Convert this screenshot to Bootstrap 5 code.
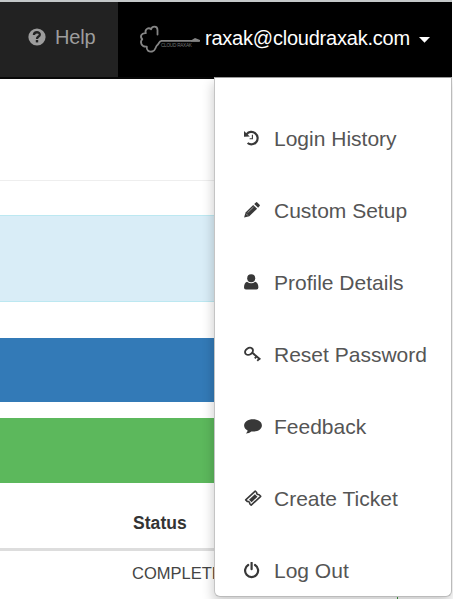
<!DOCTYPE html>
<html lang="en">
<head>
<meta charset="utf-8">
<meta name="viewport" content="width=device-width, initial-scale=1">
<title>Cloud Raxak</title>
<link rel="stylesheet" href="https://cdn.jsdelivr.net/npm/bootstrap@5.3.0/dist/css/bootstrap.min.css">
<style>
body{font-family:"Liberation Sans",Arial,sans-serif;background:#fff;width:453px;height:599px}
.topbar{height:79px;width:452px;background:#222;border-top:2px solid #c4c8c9;border-bottom:2px solid #080808}
.help-link{width:118px;padding-left:28px;color:#9d9d9d;font-size:20px;gap:9px;height:70px}
.help-link span{letter-spacing:-.2px}
.account{background:#000;color:#fff;padding-left:21px;font-size:20px;height:75px;padding-bottom:4px}
.account .mail{letter-spacing:-.22px;margin-left:4px}
.brand-key{margin-top:5px}
.caret{margin-left:9px;margin-top:4px}
main{width:440px}
.heading-space{height:102px;border-bottom:1px solid #eee}
.info-box{height:87px;margin-top:34px;background:#d9edf7;border:solid #bce8f1;border-width:1px 0}
.bar-blue{height:64px;margin-top:36px;background:#337ab7}
.bar-green{height:65px;margin-top:16px;background:#5cb85c}
.status-head{height:68px;border-bottom:3px solid #ddd;padding:28px 0 0 133px;font-weight:700;font-size:17.5px;line-height:24px;color:#333;letter-spacing:.05px}
.status-row{height:48px;padding:10px 0 0 132px;font-size:16.5px;line-height:24px;color:#444}
.row-tick{width:1px;height:2px;margin-left:auto;margin-right:42px;background:#3c963c}
.user-menu{left:213.5px;top:77px;width:238.5px;height:520px;border:1px solid #bbb;border-top-color:#999;border-left-color:#c4c4c4;border-radius:0 0 6px 6px;box-shadow:-1px 6px 12px rgba(0,0,0,.2);padding:24px 0 0;margin:0;background:#fff}
.user-menu a{height:72px;padding:2px 0 0 29.5px;font-size:21px;color:#555;display:flex;align-items:center}
.user-menu svg{width:18px;height:18px;margin-right:12px;color:#383838;flex:none}
</style>
<script src="https://cdn.jsdelivr.net/npm/bootstrap@5.3.0/dist/js/bootstrap.bundle.min.js"></script>
</head>
<body class="position-relative overflow-hidden">
<nav class="topbar d-flex">
  <a href="#" class="help-link d-flex align-items-center text-decoration-none">
    <svg width="18" height="18" viewBox="0 0 18 18"><circle cx="9" cy="9" r="8.6" fill="#9d9d9d"/><path d="M5.9 7C6 3.3 12 3.5 11.8 6.7C11.7 8.7 9 8.4 9 10.9" fill="none" stroke="#222" stroke-width="2.3"/><rect x="7.8" y="12" width="2.4" height="2.4" fill="#222"/></svg>
    <span>Help</span>
  </a>
  <a href="#" class="account d-flex align-items-center flex-grow-1 text-decoration-none">
    <svg class="brand-key" width="62" height="30" viewBox="0 0 62 30"><g fill="none" stroke="#858585" stroke-width="1.8" stroke-linecap="round" stroke-linejoin="round"><path d="M18.5 9.5V5C18.5 2.6 17.5 1.6 15.5 1.6C13 1.6 12.3 3 12.2 4.3C9.5 1.7 5.4 4.5 6.8 8.2C2 7.8.8 12 3.3 14.2C.8 16.7 2 22.2 7.8 21.6C7.2 25.5 10 27.2 13.1 26.5C17 25.6 16 22.3 18 20.4C20 18.8 20 16.2 22.5 15.8H60"/></g><path d="M52 15.5L56 13L61 15V16.5H52Z" fill="#858585"/><text x="22" y="22" font-size="4.7" textLength="31" fill="#727272" font-family="Liberation Sans, sans-serif">CLOUD RAXAK</text></svg>
    <span class="mail">raxak@cloudraxak.com</span>
    <svg class="caret" width="11" height="6" viewBox="0 0 11 6"><path d="M0 0H11L5.5 5.7Z" fill="#fff"/></svg>
  </a>
</nav>
<main>
  <div class="heading-space"></div>
  <div class="info-box"></div>
  <div class="bar-blue"></div>
  <div class="bar-green"></div>
  <div class="status-head">Status</div>
  <div class="status-row d-flex align-items-end"><span class="align-self-start">COMPLETED</span><i class="row-tick"></i></div>
</main>
<ul class="user-menu position-absolute list-unstyled">
  <li><a href="#" class="text-decoration-none"><svg viewBox="0 0 18 18"><path d="M2.6 4.2A6.2 6.2 0 1 1 3.6 13" fill="none" stroke="currentColor" stroke-width="2.2"/><path d="M0 1L5.8 6.4L0 6.7Z" fill="currentColor"/><path d="M8.4 4.8V8.8H5.6" fill="none" stroke="currentColor" stroke-width="1.1"/></svg>Login History</a></li>
  <li><a href="#" class="text-decoration-none"><svg viewBox="0 0 18 18"><g transform="translate(-.7 -1)"><path fill="currentColor" d="M.8 16.5L2.2 11.4L9.9 4L13.8 7.8L6 15.3ZM10.9 3L12.6 1.4Q13.3.8 14 1.4L16.3 3.7Q16.9 4.4 16.3 5.1L14.8 6.8Z"/><path d="M4.2 11.7L10.2 6M2.6 12.5L4.6 14.5" stroke="#fff" stroke-width=".5"/></g></svg>Custom Setup</a></li>
  <li><a href="#" class="text-decoration-none"><svg viewBox="0 0 18 18"><circle cx="7.2" cy="4.3" r="4" fill="currentColor"/><path d="M3 7.7Q7.2 11 11.2 7.7Q14.4 8.8 14.4 13.5Q14.4 15.5 12.5 15.5H1.9Q0 15.5 0 13.5Q0 8.8 3 7.7Z" fill="currentColor"/></svg>Profile Details</a></li>
  <li><a href="#" class="text-decoration-none"><svg viewBox="0 0 18 18"><g fill="none" stroke="currentColor" transform="translate(-.2 -1)"><ellipse cx="5.2" cy="6.3" rx="4.2" ry="3.2" transform="rotate(-35 5.2 6.3)" stroke-width="1.9"/><path d="M8.2 7.6L16.5 14.5" stroke-width="2"/><path d="M13 11.2L11 13.4M15.6 13.5L13.5 15.8" stroke-width="1.8"/></g></svg>Reset Password</a></li>
  <li><a href="#" class="text-decoration-none"><svg viewBox="0 0 18 18"><path fill="currentColor" d="M9 1.2C4 1.2.1 3.9.1 7.4C.1 9.5 1.5 11.3 3.6 12.4C3.4 13.8 2.6 14.8 1.7 15.6C4.3 15.4 6 14.6 7.3 13.5C13 14 17.9 11.4 17.9 7.4C17.9 3.9 14 1.2 9 1.2Z"/></svg>Feedback</a></li>
  <li><a href="#" class="text-decoration-none"><svg viewBox="0 0 18 18"><g transform="translate(.2 -.8)"><path fill="none" stroke="currentColor" stroke-width="1.6" stroke-linejoin="round" d="M1.5 10.7L11 1.9L12.5 3.3Q12.2 5.5 15 5.5L16.5 7.1L7 16L5.5 14.5Q5.8 12.3 3 12.2Z"/><path d="M4.8 10.6L10.7 5L13.3 7.5L7.4 13.1Z" fill="currentColor"/></g></svg>Create Ticket</a></li>
  <li><a href="#" class="text-decoration-none"><svg viewBox="0 0 18 18"><path transform="translate(-.4 -.8)" fill="none" stroke="currentColor" stroke-width="2.2" stroke-linecap="round" d="M4.6 3.8A6.5 6.5 0 1 0 11.4 3.8M8 1.6V8"/></svg>Log Out</a></li>
</ul>
</body>
</html>
